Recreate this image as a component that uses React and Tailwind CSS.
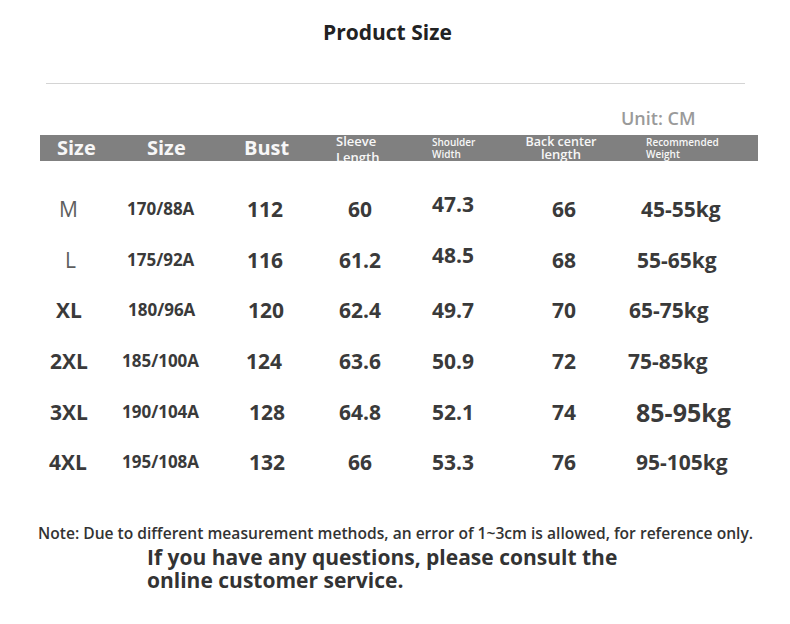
import React from "react";

const rows = [
  { s: "M", sReg: true, sPl: 19, a: "170/88A", aPl: 17, b: "112", bPl: 18, c: "60", sh: "47.3", shUp: true, d: "66", w: "45-55kg", wPl: 41 },
  { s: "L", sReg: true, sPl: 25, a: "175/92A", aPl: 17, b: "116", bPl: 18, c: "61.2", sh: "48.5", shUp: true, d: "68", w: "55-65kg", wPl: 37 },
  { s: "XL", sPl: 16, a: "180/96A", aPl: 18, b: "120", bPl: 19, c: "62.4", sh: "49.7", d: "70", w: "65-75kg", wPl: 29 },
  { s: "2XL", sPl: 10, a: "185/100A", aPl: 12, b: "124", bPl: 17, c: "63.6", sh: "50.9", d: "72", w: "75-85kg", wPl: 28 },
  { s: "3XL", sPl: 10, a: "190/104A", aPl: 12, b: "128", bPl: 20, c: "64.8", sh: "52.1", d: "74", w: "85-95kg", wPl: 36, big: true },
  { s: "4XL", sPl: 9, a: "195/108A", aPl: 12, b: "132", bPl: 20, c: "66", sh: "53.3", d: "76", w: "95-105kg", wPl: 36 },
];

export default function App() {
  return (
    <div
      className="w-[790px] h-[624px] bg-white overflow-hidden text-[#3a3a3a]"
      style={{ fontFamily: '"Open Sans", "Noto Sans", sans-serif' }}
    >
      {/* Title */}
      <div className="h-[83px] pt-[18px] pl-[323px]">
        <div className="text-[21px] leading-[28px] font-bold text-[#222]">Product Size</div>
      </div>
      <div className="ml-[46px] w-[699px] border-t border-[#d4d4d4]"></div>

      {/* Unit */}
      <div className="h-[51px] pt-[22px] pl-[621px]">
        <div className="text-[18px] leading-[24px] font-semibold text-[#9a9a9a]">Unit: CM</div>
      </div>

      {/* Header bar */}
      <div className="ml-[40px] w-[718px] h-[26px] bg-[#808080] flex overflow-hidden text-[#f7f7f7] font-bold">
        <div className="w-[70px] shrink-0 pl-[17px] text-[20px] leading-[26px]">Size</div>
        <div className="w-[120px] shrink-0 pl-[37px] text-[20px] leading-[26px]">Size</div>
        <div className="w-[90px] shrink-0 pl-[14px] text-[20px] leading-[26px]">Bust</div>
        <div className="w-[80px] shrink-0 pl-[16px] text-[13px] leading-[16px] font-semibold -mt-[2px]">
          <div>Sleeve</div>
          <div>Length</div>
        </div>
        <div className="w-[110px] shrink-0 pl-[32px] text-[10px] leading-[12px] font-semibold mt-[1px]">
          <div>Shoulder</div>
          <div>Width</div>
        </div>
        <div className="w-[100px] shrink-0 pl-[11px] font-semibold">
          <div className="w-[80px] text-center whitespace-nowrap">
            <div className="text-[12.5px] leading-[13px]">Back center</div>
            <div className="text-[13px] leading-[13px]">length</div>
          </div>
        </div>
        <div className="flex-1 pl-[36px] text-[10px] leading-[12px] font-semibold mt-[1px]">
          <div>Recommended</div>
          <div>Weight</div>
        </div>
      </div>

      {/* Rows */}
      <div className="ml-[40px] mt-[23px] flex flex-col">
        {rows.map((r, i) => (
          <div key={i} className="h-[50.6px] flex items-center font-bold text-[21px] leading-[28px] whitespace-nowrap">
            <div className="w-[70px] shrink-0" style={{ paddingLeft: r.sPl }}>
              <span className={r.sReg ? "font-normal text-[#5e5e5e]" : ""}>{r.s}</span>
            </div>
            <div className="w-[120px] shrink-0 text-[17px]" style={{ paddingLeft: r.aPl }}>{r.a}</div>
            <div className="w-[90px] shrink-0" style={{ paddingLeft: r.bPl - 1 }}>{r.b}</div>
            <div className="w-[80px] shrink-0 text-center">{r.c}</div>
            <div className={"w-[120px] shrink-0 pl-[32px] " + (r.shUp ? "mb-[10px]" : "")}>{r.sh}</div>
            <div className="w-[80px] shrink-0 pl-[32px]">{r.d}</div>
            <div
              className={r.big ? "flex-1 text-[25px]" : "flex-1"}
              style={{ paddingLeft: r.wPl }}
            >
              {r.w}
            </div>
          </div>
        ))}
      </div>

      {/* Notes */}
      <div className="mt-[35px] pl-[38px] text-[15.6px] leading-[20px] font-semibold text-[#333] whitespace-nowrap">
        Note: Due to different measurement methods, an error of 1~3cm is allowed, for reference only.
      </div>
      <div className="mt-[3px] pl-[147px] text-[21px] leading-[23px] font-bold text-[#333]">
        <div>If you have any questions, please consult the</div>
        <div>online customer service.</div>
      </div>
    </div>
  );
}
